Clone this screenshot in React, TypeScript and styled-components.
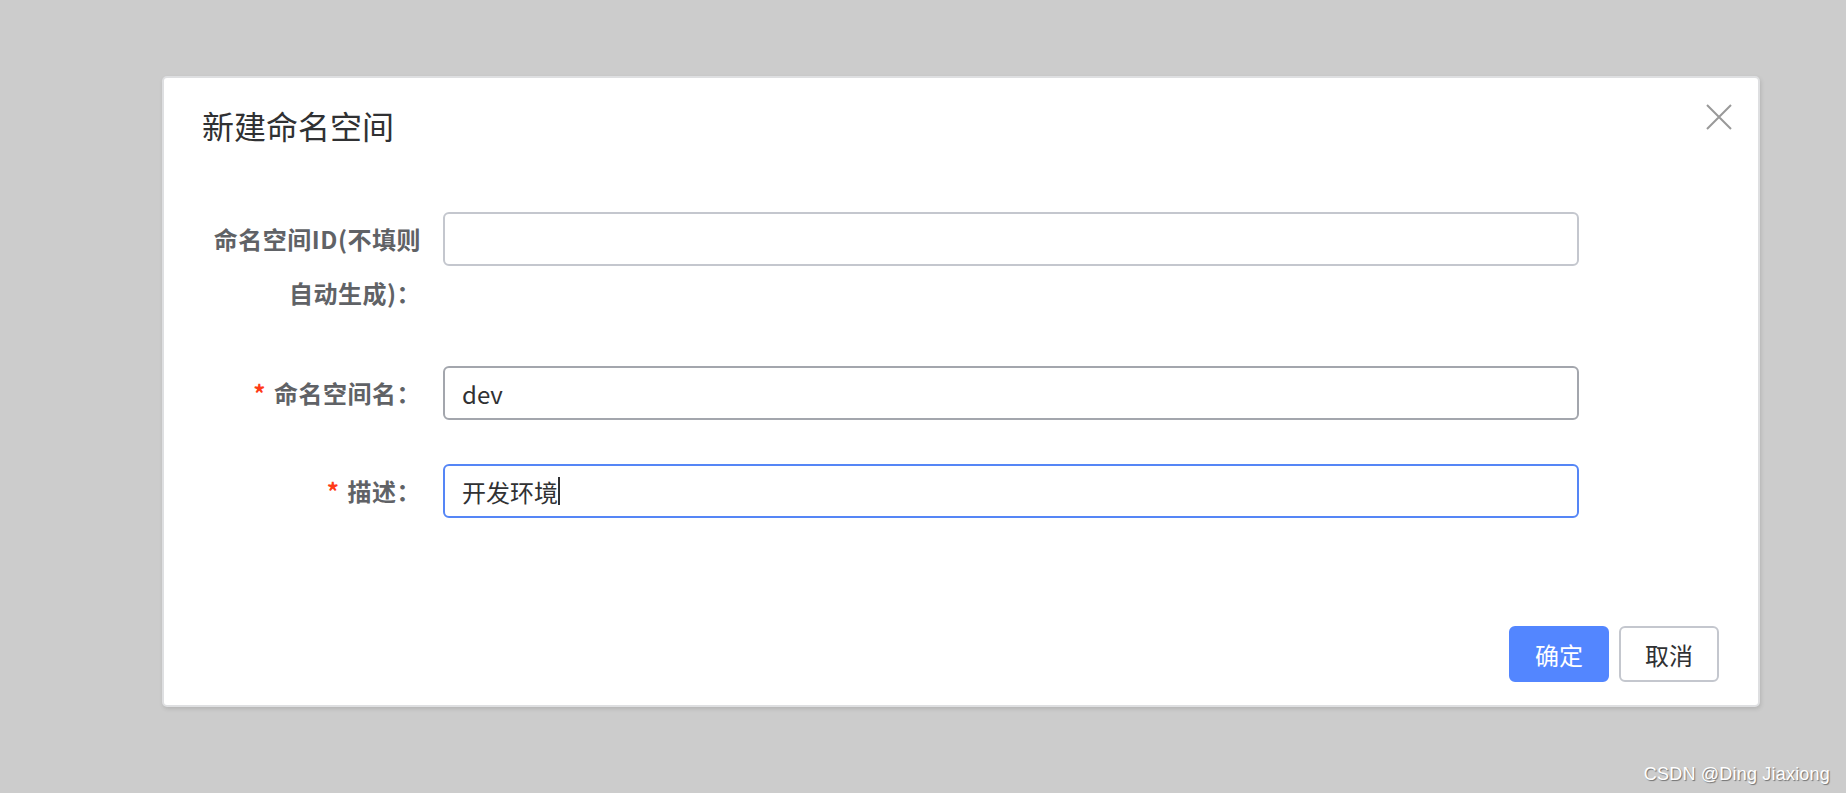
import styled, { createGlobalStyle } from "styled-components"

const GlobalStyle = createGlobalStyle`
    html, body {
        margin: 0;
        padding: 0;
        background: #cccccc;
        font-family: "Noto Sans CJK SC", "Noto Sans", sans-serif;
    }
`

const Page = styled.div`
    position: relative;
    width: 1846px;
    height: 793px;
    box-sizing: border-box;
    padding: 76px 0 0 162px;
    overflow: hidden;
`

const Dialog = styled.div`
    position: relative;
    width: 1598px;
    box-sizing: border-box;
    background: #ffffff;
    border: 2px solid #dedfe1;
    border-radius: 5px;
    box-shadow: 1px 2px 4px rgba(0, 0, 0, 0.12);
`

const Header = styled.div`
    padding: 23px 38px 0;
`

const Title = styled.h2`
    margin: 0;
    font-size: 32px;
    line-height: 48px;
    font-weight: 400;
    color: #303133;
`

const CloseBtn = styled.button`
    position: absolute;
    top: 26px;
    right: 26px;
    width: 26px;
    height: 26px;
    padding: 0;
    border: none;
    background: transparent;
    cursor: pointer;
    display: flex;
    align-items: center;
    justify-content: center;
`

const Body = styled.form`
    padding: 63px 38px 0;
    display: flex;
    flex-direction: column;
`

const FormItem = styled.div<{ gap: number }>`
    display: flex;
    align-items: flex-start;
    margin-bottom: ${p => p.gap}px;
`

const Label = styled.label`
    width: 241px;
    flex-shrink: 0;
    box-sizing: border-box;
    padding-right: 22px;
    text-align: right;
    font-size: 24px;
    line-height: 54px;
    font-weight: 700;
    color: #606266;
    letter-spacing: 0.5px;
`

const Star = styled.span`
    color: #ff3b17;
    margin-right: 8px;
`

type InputState = "normal" | "hover" | "focus"

const borderColors: Record<InputState, string> = {
    normal: "#c4c7ce",
    hover: "#a3a6ad",
    focus: "#5586f6",
}

const Field = styled.div`
    position: relative;
    display: flex;
`

const Input = styled.input<{ state: InputState }>`
    width: 1136px;
    height: 54px;
    box-sizing: border-box;
    border: 2px solid ${p => borderColors[p.state]};
    border-radius: 6px;
    padding: 0 17px;
    font-family: "Noto Sans CJK SC", "Noto Sans", sans-serif;
    font-size: 24px;
    color: #303133;
    background: #ffffff;
    outline: none;
    caret-color: #303133;
`

const Caret = styled.span<{ left: number }>`
    position: absolute;
    top: 13px;
    left: ${p => p.left}px;
    width: 2px;
    height: 28px;
    background: #303133;
`

const Footer = styled.div`
    display: flex;
    justify-content: flex-end;
    gap: 10px;
    padding: 108px 39px 23px;
`

const Button = styled.button<{ primary?: boolean }>`
    width: 100px;
    height: 56px;
    box-sizing: border-box;
    border-radius: 6px;
    border: 2px solid ${p => p.primary ? "#5386ff" : "#c4c7ce"};
    background: ${p => p.primary ? "#5386ff" : "#ffffff"};
    color: ${p => p.primary ? "#ffffff" : "#303133"};
    font-family: "Noto Sans CJK SC", "Noto Sans", sans-serif;
    font-size: 24px;
    cursor: pointer;
    padding: 0;
`

const Watermark = styled.div`
    position: absolute;
    right: 16px;
    bottom: 8px;
    font-family: "Liberation Sans", Arial, sans-serif;
    font-size: 18px;
    color: #ffffff;
    text-shadow: 1px 1px 1px rgba(0, 0, 0, 0.45);
    letter-spacing: 0.2px;
`

const App = () => {
    return <Page>
        <GlobalStyle />
        <Dialog>
            <Header>
                <Title>新建命名空间</Title>
            </Header>
            <CloseBtn type="button" aria-label="关闭">
                <svg width="26" height="26" viewBox="0 0 26 26">
                    <path d="M1 1 L25 25 M25 1 L1 25" stroke="#999999" strokeWidth="2" fill="none" />
                </svg>
            </CloseBtn>
            <Body onSubmit={e => e.preventDefault()}>
                <FormItem gap={46}>
                    <Label>命名空间ID(不填则<br />自动生成)：</Label>
                    <Field>
                        <Input state="normal" defaultValue="" />
                    </Field>
                </FormItem>
                <FormItem gap={44}>
                    <Label><Star>*</Star>命名空间名：</Label>
                    <Field>
                        <Input state="hover" defaultValue="dev" />
                    </Field>
                </FormItem>
                <FormItem gap={0}>
                    <Label><Star>*</Star>描述：</Label>
                    <Field>
                        <Input state="focus" defaultValue="开发环境" />
                        <Caret left={115} />
                    </Field>
                </FormItem>
            </Body>
            <Footer>
                <Button type="button" primary>确定</Button>
                <Button type="button">取消</Button>
            </Footer>
        </Dialog>
        <Watermark>CSDN @Ding Jiaxiong</Watermark>
    </Page>
}

export default App
